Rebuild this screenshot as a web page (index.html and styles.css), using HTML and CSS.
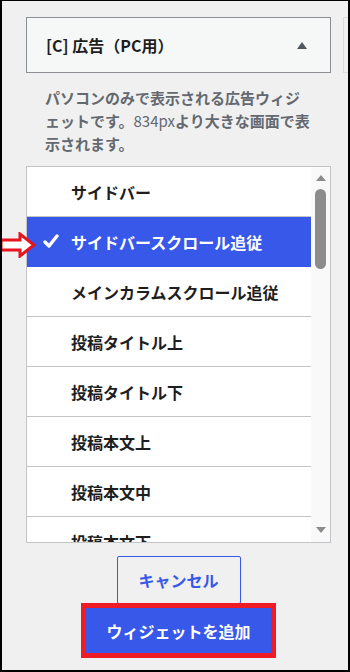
FILE: index.html
```html
<!DOCTYPE html>
<html lang="ja">
<head>
  <meta charset="UTF-8" />
  <meta name="viewport" content="width=device-width, initial-scale=1.0" />
  <title>ウィジェットを追加</title>
  <link rel="stylesheet" href="styles.css">
</head>
<body>
  <div class="screen">
    <div class="panel">
      <div class="widget-head">
        <div class="head-box">
          <span class="head-title">[C] 広告（PC用）</span>
          <span class="head-toggle"></span>
        </div>
        <div class="head-peek"></div>
      </div>

      <p class="desc">パソコンのみで表示される広告ウィジェットです。<span class="num">834px</span>より大きな画面で表示されます。</p>

      <div class="list">
        <div class="items">
          <div class="item">サイドバー</div>
          <div class="item selected">
            <svg class="check" width="16" height="15" viewBox="0 0 16 15">
              <path d="M2 8 L6 12 L14 2" fill="none" stroke="#fff" stroke-width="3.4" stroke-linecap="round" stroke-linejoin="round"/>
            </svg>
            サイドバースクロール追従
          </div>
          <div class="item">メインカラムスクロール追従</div>
          <div class="item">投稿タイトル上</div>
          <div class="item">投稿タイトル下</div>
          <div class="item">投稿本文上</div>
          <div class="item">投稿本文中</div>
          <div class="item">投稿本文下</div>
        </div>
        <div class="scrollbar">
          <span class="arrow-up"></span>
          <span class="thumb"></span>
          <span class="track-rest"></span>
          <span class="arrow-down"></span>
        </div>
      </div>

      <div class="actions">
        <button class="btn btn-cancel">キャンセル</button>
        <button class="btn btn-add">ウィジェットを追加</button>
      </div>
    </div>

    <!-- 注記の矢印 -->
    <svg class="pointer" width="36" height="26" viewBox="0 0 36 26">
      <polygon points="1,8 20,8 20,2 34,13 20,24 20,18 1,18" fill="#fff" stroke="#e8141c" stroke-width="3" stroke-linejoin="miter"/>
    </svg>
  </div>
</body>
</html>
```

FILE: styles.css
```css
body {
  margin: 0;
  font-family: "Noto Sans CJK JP", "Noto Sans", sans-serif;
}
.screen {
  position: relative;
  width: 350px;
  height: 672px;
  box-sizing: border-box;
  border: 2px solid #000;
  border-top-width: 1px;
  background: #f0f0f0;
  overflow: hidden;
  padding: 16px 0 0 24px;
}
.panel {
  width: 305px;
}
.widget-head {
  display: flex;
  gap: 12px;
}
.head-box {
  flex: 0 0 305px;
  height: 56px;
  box-sizing: border-box;
  border: 1px solid #8c8f94;
  background: #f6f7f7;
  display: flex;
  align-items: center;
  justify-content: space-between;
  padding: 0 23px 0 19px;
}
.head-title {
  font-size: 16px;
  font-weight: 600;
  color: #1e1e1e;
}
.head-toggle {
  width: 0;
  height: 0;
  border-left: 5px solid transparent;
  border-right: 5px solid transparent;
  border-bottom: 7px solid #50575e;
}
.head-peek {
  flex: 0 0 305px;
  height: 56px;
  box-sizing: border-box;
  border: 1px solid #dcdcde;
  background: #f0f0f1;
}
.desc {
  margin: 13px 0 0;
  padding: 0 17px 0 19px;
  font-size: 15px;
  line-height: 23px;
  font-weight: 700;
  color: #646970;
}
.desc .num {
  font-weight: 400;
}
.list {
  display: flex;
  height: 377px;
  box-sizing: border-box;
  margin-top: 11px;
  border: 1px solid #c3c4c7;
  background: #fff;
}
.items {
  flex: 1;
  overflow: hidden;
}
.item {
  height: 50px;
  box-sizing: border-box;
  border-bottom: 1px solid #c3c4c7;
  display: flex;
  align-items: center;
  padding-left: 44px;
  font-size: 16px;
  font-weight: 700;
  color: #1e1e1e;
}
.item.selected {
  background: #3858e9;
  border-bottom-color: #3858e9;
  color: #fff;
  padding-left: 16px;
}
.check {
  margin-right: 12px;
}
.scrollbar {
  width: 19px;
  box-sizing: border-box;
  background: #f9f9f9;
  display: flex;
  flex-direction: column;
  align-items: center;
  padding: 8px 0 9px;
}
.arrow-up,
.arrow-down {
  width: 0;
  height: 0;
  border-left: 5px solid transparent;
  border-right: 5px solid transparent;
}
.arrow-up {
  border-bottom: 6px solid #8c8c8c;
}
.arrow-down {
  border-top: 6px solid #8c8c8c;
}
.thumb {
  width: 11px;
  height: 80px;
  margin-top: 8px;
  border-radius: 6px;
  background: #8c8c8c;
}
.track-rest {
  flex: 1;
}
.actions {
  display: flex;
  flex-direction: column;
  align-items: center;
  margin-top: 13px;
}
.btn {
  font-family: inherit;
  font-size: 16px;
  font-weight: 700;
  cursor: pointer;
  padding: 0;
}
.btn-cancel {
  width: 124px;
  height: 48px;
  border: 1px solid #3858e9;
  border-radius: 2px;
  background: transparent;
  color: #3858e9;
}
.btn-add {
  width: 185px;
  height: 45px;
  margin-top: 4px;
  border: none;
  background: #3858e9;
  color: #fff;
  outline: 5px solid #ee1c25;
}
.pointer {
  position: absolute;
  left: -2px;
  top: 231px;
}
```
